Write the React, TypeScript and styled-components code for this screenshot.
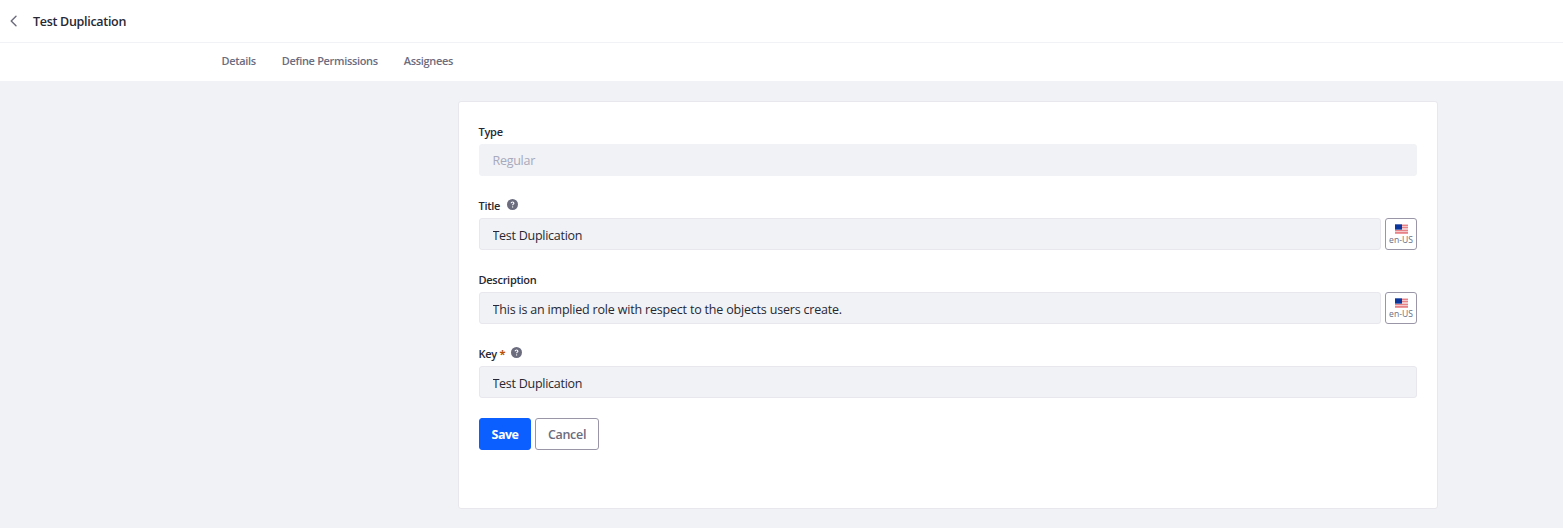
import React from 'react';
import styled, { createGlobalStyle } from 'styled-components';

const GlobalStyle = createGlobalStyle`
  * { box-sizing: border-box; }
  body {
    margin: 0;
    background: #f1f2f5;
    color: #272833;
    font-family: 'Segoe UI', 'Open Sans', 'Noto Sans', sans-serif;
    overflow: hidden;
  }
  button, input { font-family: inherit; }
`;

const Page = styled.div`
  min-height: 528px;
  display: flex;
  flex-direction: column;
`;

const Header = styled.header`
  height: 43px;
  display: flex;
  align-items: center;
  background: #fff;
  border-bottom: 1px solid #f1f2f5;
`;

const BackLink = styled.a`
  display: flex;
  width: 33px;
  padding-left: 9px;
  color: #6b6c7e;
`;

const PageTitle = styled.h1`
  margin: 0;
  padding-top: 2px;
  font-size: 12.5px;
  line-height: 20px;
  font-weight: 600;
  letter-spacing: -0.3px;
`;

const Nav = styled.nav`
  height: 38px;
  display: flex;
  align-items: center;
  gap: 26px;
  padding: 0 0 2px 221.5px;
  background: #fff;
`;

const NavLink = styled.a`
  color: #6b6c7e;
  font-size: 11px;
  line-height: 16px;
  font-weight: 600;
  letter-spacing: -0.33px;
`;

const Sheet = styled.main`
  width: 980px;
  height: 408px;
  margin: 20px 0 0 458px;
  padding: 20px;
  background: #fff;
  border: 1px solid #e7e7ed;
  border-radius: 3px;
`;

const Field = styled.div`
  margin-bottom: 20px;
`;

const Label = styled.label`
  display: flex;
  align-items: center;
  height: 22px;
  padding-bottom: 4px;
  margin-left: -0.5px;
  font-size: 11px;
  font-weight: 600;
  letter-spacing: -0.27px;
`;

const Required = styled.span`
  margin: 0 -1px 0 2.5px;
  color: #b95000;
  font-weight: 700;
`;

const HelpIcon = styled.svg`
  width: 11px;
  height: 11px;
  margin: -1px 0 0 6.5px;
  color: #6b6c7e;
`;

const InputRow = styled.div`
  display: flex;
  gap: 4px;
`;

const Input = styled.input<{ $tracking?: number }>`
  flex: 1;
  min-width: 0;
  height: 32px;
  padding: 2px 12.5px 0;
  border: 1px solid #e7e7ed;
  border-radius: 3px;
  outline: 0;
  background: #f1f2f5;
  color: #272833;
  font-size: 12.5px;
  letter-spacing: ${(p) => p.$tracking ?? -0.27}px;

  &:disabled {
    padding-top: 0;
    border-color: #f1f2f5;
    color: #a7a9bc;
  }
`;

const LocaleButton = styled.button`
  width: 32px;
  height: 32px;
  display: flex;
  flex-direction: column;
  align-items: center;
  padding: 5px 0 0;
  border: 1px solid #9a96a8;
  border-radius: 3px;
  background: #fff;
  color: #6b6c7e;
`;

const LocaleCode = styled.span`
  padding-top: 1px;
  font-size: 8.6px;
  line-height: 11px;
  font-weight: 500;
`;

const Actions = styled.div`
  display: flex;
  gap: 4px;
`;

const Button = styled.button<{ $primary?: boolean }>`
  width: ${(p) => (p.$primary ? 52 : 64)}px;
  height: 32px;
  padding: 1px 0 0;
  border: 1px solid ${(p) => (p.$primary ? '#0b5fff' : '#9a96a8')};
  border-radius: 3px;
  background: ${(p) => (p.$primary ? '#0b5fff' : '#fff')};
  color: ${(p) => (p.$primary ? '#fff' : '#6b6c7e')};
  font-size: 12.5px;
  font-weight: ${(p) => (p.$primary ? 700 : 600)};
  letter-spacing: ${(p) => (p.$primary ? -0.5 : -0.3)}px;
`;

const Help = () => (
  <HelpIcon viewBox="0 0 11 11">
    <circle cx="5.5" cy="5.5" r="5.5" fill="currentColor" />
    <path d="M4.2 4.3c0-1.7 2.7-1.7 2.7 0 0 .9-1.3.9-1.3 2" fill="none" stroke="#fff" strokeWidth="1.1" />
    <circle cx="5.6" cy="7.9" r=".65" fill="#fff" />
  </HelpIcon>
);

const Flag = () => (
  <svg width="13" height="10" viewBox="0 0 13 10" shapeRendering="crispEdges">
    <path fill="#f4c9cc" d="M0 0h13v10H0z" />
    <path fill="#e58388" d="M0 1h13v1H0zM0 3h13v1H0zM0 6h13v1H0zM0 8h13v1H0z" />
    <path fill="#ee9ba0" d="M0 9h13v1H0z" />
    <path fill="#0b369c" d="M0 1h7v4H0z" />
    <path fill="#5873b8" d="M0 0h7v1H0zM0 5h7v1H0z" />
  </svg>
);

const Locale = () => (
  <LocaleButton type="button">
    <Flag />
    <LocaleCode>en-US</LocaleCode>
  </LocaleButton>
);

export default function App() {
  return (
    <Page>
      <GlobalStyle />
      <Header>
        <BackLink>
          <svg width="9" height="12" viewBox="0 0 9 12">
            <path d="M7 1.2 2.2 6 7 10.8" fill="none" stroke="currentColor" strokeWidth="1.4" strokeLinecap="round" strokeLinejoin="round" />
          </svg>
        </BackLink>
        <PageTitle>Test Duplication</PageTitle>
      </Header>
      <Nav>
        <NavLink>Details</NavLink>
        <NavLink>Define Permissions</NavLink>
        <NavLink>Assignees</NavLink>
      </Nav>
      <Sheet>
        <Field>
          <Label>Type</Label>
          <InputRow><Input defaultValue="Regular" disabled /></InputRow>
        </Field>
        <Field>
          <Label>Title<Help /></Label>
          <InputRow><Input defaultValue="Test Duplication" /><Locale /></InputRow>
        </Field>
        <Field>
          <Label>Description</Label>
          <InputRow>
            <Input $tracking={-0.19} defaultValue="This is an implied role with respect to the objects users create." />
            <Locale />
          </InputRow>
        </Field>
        <Field>
          <Label>Key<Required>*</Required><Help /></Label>
          <InputRow><Input defaultValue="Test Duplication" /></InputRow>
        </Field>
        <Actions>
          <Button $primary type="button">Save</Button>
          <Button type="button">Cancel</Button>
        </Actions>
      </Sheet>
    </Page>
  );
}
